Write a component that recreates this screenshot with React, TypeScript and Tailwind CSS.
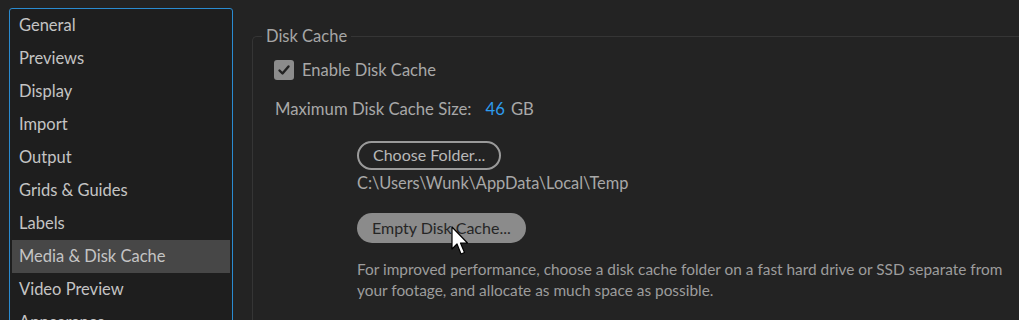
const sections = [
  "General",
  "Previews",
  "Display",
  "Import",
  "Output",
  "Grids & Guides",
  "Labels",
  "Media & Disk Cache",
  "Video Preview",
  "Appearance",
];

const selected = "Media & Disk Cache";

function Cursor() {
  return (
    <svg className="absolute left-[94px] top-[13px]" width="20" height="30" viewBox="0 0 20 30">
      <path
        d="M1 1 L1 23 L6 18 L10 28 L13.5 26.5 L9.5 17 L16.5 17 Z"
        fill="#ffffff"
        stroke="#000000"
        strokeWidth="1.2"
        strokeLinejoin="round"
      />
    </svg>
  );
}

export default function App() {
  return (
    <div
      className="flex h-[320px] w-[1019px] overflow-hidden bg-[#232323]"
      style={{ fontFamily: "Lato, 'Noto Sans', sans-serif" }}
    >
      {/* section list */}
      <div className="ml-[9px] mt-[8px] h-[340px] w-[224px] shrink-0 rounded-[3px] border border-[#2a8bd0] bg-[#1e1e1e] px-[2px]">
        {sections.map((name) => (
          <div
            key={name}
            className={
              name === selected
                ? "flex h-[33px] items-center bg-[#474747] pb-[1px] pl-[7px] text-[16.5px] text-[#c4c4c4]"
                : "flex h-[33px] items-center pb-[1px] pl-[7px] text-[16.5px] text-[#c4c4c4]"
            }
          >
            {name}
          </div>
        ))}
      </div>

      {/* disk cache group */}
      <fieldset className="ml-[19px] mt-[25px] h-[340px] flex-1 rounded-tl-[5px] border-l border-t border-[#353535]">
        <legend className="ml-[9px] px-[4px] text-[16.5px] leading-[22px] text-[#a6a6a6]">Disk Cache</legend>

        <div className="ml-[21px] mt-[11px] flex items-center gap-[8px]">
          <div className="flex h-[20px] w-[20px] items-center justify-center rounded-[3px] bg-[#8c8c8c]">
            <svg width="14" height="14" viewBox="0 0 14 14">
              <path d="M2.5 7.5 L5.5 10.5 L11.5 3.5" fill="none" stroke="#222222" strokeWidth="2.4" strokeLinecap="round" strokeLinejoin="round" />
            </svg>
          </div>
          <span className="text-[16.5px] text-[#a8a8a8]">Enable Disk Cache</span>
        </div>

        <div className="ml-[22px] mt-[14px] flex items-center text-[16.7px] text-[#a8a8a8]">
          <span>Maximum Disk Cache Size:</span>
          <span className="ml-[14px] text-[#2e9cee]">46</span>
          <span className="ml-[6px]">GB</span>
        </div>

        <div className="ml-[104px] mt-[19px] flex flex-col items-start">
          <button className="h-[29px] rounded-full border-2 border-[#9a9a9a] px-[14px] text-[16px] text-[#b8b8b8]">
            Choose Folder...
          </button>
          <div className="mt-[2px] text-[16.4px] leading-[22px] text-[#a8a8a8]">C:\Users\Wunk\AppData\Local\Temp</div>
          <div className="relative mt-[19px]">
            <button className="h-[30px] rounded-full bg-[#8b8b8b] px-[15px] text-[16px] text-[#262626]">
              Empty Disk Cache...
            </button>
            <Cursor />
          </div>
          <p className="mt-[16px] w-[660px] text-[15.4px] leading-[21px] text-[#9c9c9c]">
            For improved performance, choose a disk cache folder on a fast hard drive or SSD separate from your footage, and allocate as much space as possible.
          </p>
        </div>
      </fieldset>
    </div>
  );
}
